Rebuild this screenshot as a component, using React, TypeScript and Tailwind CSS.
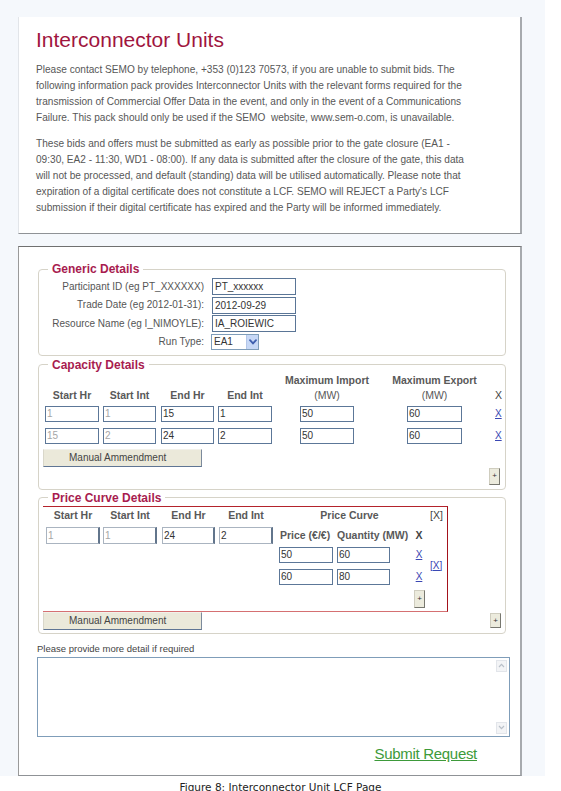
import React from "react";

const SANS = "font-['Liberation_Sans',Arial,sans-serif]";

function Field({
  value,
  className = "",
  muted = false,
}: {
  value: string;
  className?: string;
  muted?: boolean;
}) {
  return (
    <input
      readOnly
      value={value}
      className={`block shrink-0 bg-white px-[1px] text-[10px] leading-none outline-none ${
        muted ? "text-[#a6a6a6]" : "text-[#333]"
      } ${className}`}
    />
  );
}

function PlusButton({ className = "" }: { className?: string }) {
  return (
    <button
      type="button"
      className={`flex shrink-0 items-center justify-center border border-[#cfcdbf] border-r-[#77776f] border-b-[#77776f] bg-[#ecebdd] text-[8px] leading-none text-[#333] ${className}`}
    >
      +
    </button>
  );
}

function ManualButton() {
  return (
    <button
      type="button"
      className="h-[18px] w-[159px] shrink-0 border border-[#d9d7ca] border-t-[#f2f1ea] border-r-[#7c8a9c] border-b-[#5f7594] bg-[#ebe9da] pl-[25px] text-left text-[10px] leading-none text-[#444]"
    >
      Manual Ammendment
    </button>
  );
}

function Legend({ children }: { children: React.ReactNode }) {
  return (
    <legend className="ml-[9px] px-[4px] text-[12px] font-bold leading-[14px] text-[#a81c4f]">
      {children}
    </legend>
  );
}

function XLink({ children = "X" }: { children?: React.ReactNode }) {
  return (
    <a href="#" className="text-[10px] leading-none text-[#3a47b3] underline">
      {children}
    </a>
  );
}

function Chevron() {
  return (
    <svg width="8" height="6" viewBox="0 0 8 6" fill="none">
      <path d="M1 1.2 L4 4.4 L7 1.2" stroke="#3f5fae" strokeWidth="1.8" strokeLinecap="round" />
    </svg>
  );
}

const genericRows = [
  { label: "Participant ID (eg PT_XXXXXX)", value: "PT_xxxxxx" },
  { label: "Trade Date (eg 2012-01-31):", value: "2012-09-29" },
  { label: "Resource Name (eg I_NIMOYLE):", value: "IA_ROIEWIC" },
];

const capacityRows = [
  { sh: "1", si: "1", eh: "15", ei: "1", imp: "50", exp: "60" },
  { sh: "15", si: "2", eh: "24", ei: "2", imp: "50", exp: "60" },
];

const priceRows = [
  { price: "50", qty: "60" },
  { price: "60", qty: "80" },
];

const capInput = "h-[16px] border border-[#5c7798]";
const pcInput = "h-[17px] border border-[#aab4c0] border-r-2 border-r-[#62758c]";

const para1 = [
  "Please contact SEMO by telephone, +353 (0)123 70573, if you are unable to submit bids. The",
  "following information pack provides Interconnector Units with the relevant forms required for the",
  "transmission of Commercial Offer Data in the event, and only in the event of a Communications",
  "Failure. This pack should only be used if the SEMO  website, www.sem-o.com, is unavailable.",
];

const para2 = [
  "These bids and offers must be submitted as early as possible prior to the gate closure (EA1 -",
  "09:30, EA2 - 11:30, WD1 - 08:00). If any data is submitted after the closure of the gate, this data",
  "will not be processed, and default (standing) data will be utilised automatically. Please note that",
  "expiration of a digital certificate does not constitute a LCF. SEMO will REJECT a Party's LCF",
  "submission if their digital certificate has expired and the Party will be informed immediately.",
];

export default function App() {
  return (
    <div className={`h-[791px] w-[561px] overflow-hidden bg-white text-[10px] leading-[12px] ${SANS}`}>
      <div className="w-[545px] bg-[#f5f8fc] pl-[18px] pt-[17px]">
        {/* Intro page */}
        <section className="h-[217px] w-[504px] border-l border-b border-r-2 border-l-[#e2e5e9] border-b-[#8f9296] border-r-[#a7aaae] bg-white pl-[17px] pt-[11px]">
          <h1 className="text-[21px] leading-[24px] text-[#a0153e]">Interconnector Units</h1>
          <div className="mt-[10px] text-[10.1px] leading-[16px] text-[#575757]">
            {para1.map((l) => (
              <div key={l} className="whitespace-pre">
                {l}
              </div>
            ))}
          </div>
          <div className="mt-[10px] text-[10.1px] leading-[16px] text-[#575757]">
            {para2.map((l) => (
              <div key={l} className="whitespace-pre">
                {l}
              </div>
            ))}
          </div>
        </section>

        {/* LCF form page */}
        <section className="mt-[12px] h-[530px] w-[504px] border-t border-l border-b border-r-2 border-t-[#707070] border-l-[#9a9a9a] border-b-[#8f9296] border-r-[#a7aaae] bg-white pt-[15px]">
          {/* Generic Details */}
          <fieldset className="ml-[19px] w-[468px] rounded-[4px] border border-[#d6d3c8] pt-[2px] pb-[5px]">
            <Legend>Generic Details</Legend>
            <div className="flex flex-col gap-[1.5px]">
              {genericRows.map((r) => (
                <div key={r.label} className="flex items-center">
                  <div className="w-[165px] whitespace-nowrap text-right text-[10px] leading-none text-[#555]">
                    {r.label}
                  </div>
                  <Field
                    value={r.value}
                    className="ml-[8px] h-[17px] w-[84px] border border-[#5a7596] pl-[2px] text-[10.5px]"
                  />
                </div>
              ))}
              <div className="flex items-center">
                <div className="w-[165px] text-right text-[10px] leading-none text-[#555]">Run Type:</div>
                <div className="ml-[7px] flex h-[16px] w-[48px] border border-[#7f9db9] bg-white">
                  <span className="flex-1 pl-[2px] text-[10px] leading-[14px] text-[#333]">EA1</span>
                  <span className="flex w-[12px] items-center justify-center border-l border-[#b3c6e8] bg-[#c7d8f6]">
                    <Chevron />
                  </span>
                </div>
              </div>
            </div>
          </fieldset>

          {/* Capacity Details */}
          <fieldset className="ml-[19px] mt-[2px] w-[468px] rounded-[4px] border border-[#d6d3c8] pt-[1.5px] pb-[4px]">
            <Legend>Capacity Details</Legend>
            <div className="flex items-end text-[10.5px] font-bold leading-[15px] text-[#595959]">
              <div className="ml-[6px] flex w-[54px] flex-col items-center whitespace-nowrap">Start Hr</div>
              <div className="ml-[4px] flex w-[53px] flex-col items-center whitespace-nowrap">Start Int</div>
              <div className="ml-[5px] flex w-[53px] flex-col items-center whitespace-nowrap">End Hr</div>
              <div className="ml-[4px] flex w-[54px] flex-col items-center whitespace-nowrap">End Int</div>
              <div className="ml-[28px] flex w-[54px] flex-col items-center whitespace-nowrap">
                <span>Maximum Import</span>
                <span className="font-normal">(MW)</span>
              </div>
              <div className="ml-[53px] flex w-[55px] flex-col items-center whitespace-nowrap">
                <span>Maximum Export</span>
                <span className="font-normal">(MW)</span>
              </div>
              <div className="ml-[33px] font-normal text-[#444]">X</div>
            </div>
            {capacityRows.map((r, i) => (
              <div key={i} className={`flex h-[16px] items-center leading-none ${i === 0 ? "mt-[2.5px]" : "mt-[6px]"}`}>
                <Field value={r.sh} muted className={`ml-[6px] w-[54px] ${capInput}`} />
                <Field value={r.si} muted className={`ml-[4px] w-[53px] ${capInput}`} />
                <Field value={r.eh} className={`ml-[5px] w-[53px] ${capInput}`} />
                <Field value={r.ei} className={`ml-[4px] w-[54px] ${capInput}`} />
                <Field value={r.imp} className={`ml-[28px] w-[54px] ${capInput}`} />
                <Field value={r.exp} className={`ml-[53px] w-[55px] ${capInput}`} />
                <div className="ml-[33px] leading-none">
                  <XLink />
                </div>
              </div>
            ))}
            <div className="ml-[4px] mt-[5px] flex">
              <ManualButton />
            </div>
            <div className="mt-[1px] flex justify-end pr-[5px]">
              <PlusButton className="h-[17px] w-[11px]" />
            </div>
          </fieldset>

          {/* Price Curve Details */}
          <fieldset className="ml-[19px] mt-[1px] w-[468px] rounded-[4px] border border-[#d6d3c8] pb-[3px]">
            <Legend>Price Curve Details</Legend>
            <div className="ml-[4px] mt-[1px] flex w-[405px] items-start border-t border-r border-b border-t-[#b4232c] border-r-[#a3121b] border-b-[#d57072] pb-[3px]">
              {/* hour / interval block */}
              <div className="flex flex-col pl-[3px]">
                <div className="mt-[1.5px] flex text-[10.5px] font-bold leading-[15px] text-[#595959]">
                  <div className="flex w-[54px] flex-col items-center whitespace-nowrap">Start Hr</div>
                  <div className="ml-[3px] flex w-[54px] flex-col items-center whitespace-nowrap">Start Int</div>
                  <div className="ml-[5px] flex w-[53px] flex-col items-center whitespace-nowrap">End Hr</div>
                  <div className="ml-[4px] flex w-[54px] flex-col items-center whitespace-nowrap">End Int</div>
                </div>
                <div className="mt-[3.5px] flex">
                  <Field value="1" muted className={`w-[54px] ${pcInput}`} />
                  <Field value="1" muted className={`ml-[3px] w-[54px] ${pcInput}`} />
                  <Field value="24" className={`ml-[5px] w-[53px] ${pcInput}`} />
                  <Field value="2" className={`ml-[4px] w-[54px] ${pcInput}`} />
                </div>
              </div>

              {/* price curve table */}
              <div className="ml-[6px] flex flex-col">
                <div className="mt-[1.5px] flex text-[10.5px] font-bold leading-[15px] text-[#595959]">
                  <div className="flex w-[141px] flex-col items-center whitespace-nowrap">Price Curve</div>
                  <div className="ml-[10px] font-normal text-[#444]">[X]</div>
                </div>
                <div className="mt-[3.5px] flex h-[18px] items-center whitespace-nowrap text-[10.5px] font-bold leading-none text-[#595959]">
                  <div className="w-[54px] pl-[1px]">Price (€/€)</div>
                  <div className="ml-[4px] w-[53px]">Quantity (MW)</div>
                  <div className="ml-[21px] w-[16px] text-center text-[#444]">X</div>
                </div>
                <div className="mt-[2px] flex leading-none">
                  <div className="flex flex-col gap-[6px]">
                    {priceRows.map((r, i) => (
                      <div key={i} className="flex h-[16px] items-center">
                        <Field value={r.price} className={`w-[54px] ${capInput}`} />
                        <Field value={r.qty} className={`ml-[4px] w-[53px] ${capInput}`} />
                        <div className="ml-[21px] w-[16px] text-center leading-none">
                          <XLink />
                        </div>
                      </div>
                    ))}
                  </div>
                  <div className="ml-[3px] self-center leading-none">
                    <XLink>[X]</XLink>
                  </div>
                </div>
                <div className="ml-[135px] mt-[5px] flex">
                  <PlusButton className="h-[18px] w-[11px]" />
                </div>
              </div>
            </div>
            <div className="flex items-center justify-between pl-[4px] pr-[4px]">
              <ManualButton />
              <PlusButton className="h-[15px] w-[11px]" />
            </div>
          </fieldset>

          {/* Free-text details */}
          <div className="ml-[18px] mt-[9px] text-[9.5px] leading-[12px] text-[#444]">
            Please provide more detail if required
          </div>
          <div className="ml-[18px] mt-[2px] flex h-[80px] w-[473px] border border-[#7f9db9] bg-white">
            <div className="flex-1" />
            <div className="flex w-[13px] flex-col justify-between py-[2px] pr-[2px]">
              <div className="flex h-[12px] w-[11px] items-center justify-center border border-[#e2e5ea] bg-[#f3f4f6]">
                <svg width="7" height="5" viewBox="0 0 7 5" fill="none">
                  <path d="M1 4 L3.5 1.3 L6 4" stroke="#b9c0c9" strokeWidth="1.2" />
                </svg>
              </div>
              <div className="flex h-[12px] w-[11px] items-center justify-center border border-[#e2e5ea] bg-[#f3f4f6]">
                <svg width="7" height="5" viewBox="0 0 7 5" fill="none">
                  <path d="M1 1 L3.5 3.7 L6 1" stroke="#b9c0c9" strokeWidth="1.2" />
                </svg>
              </div>
            </div>
          </div>
          <div className="mt-[8px] flex justify-end pr-[43px]">
            <a href="#" className="text-[15px] leading-[18px] tracking-[-0.3px] text-[#3d9a3a] underline">
              Submit Request
            </a>
          </div>
        </section>
      </div>
      <div className="mt-[5px] text-center font-['DejaVu_Sans',Verdana,sans-serif] text-[10.5px] leading-[12px] text-[#222]">
        Figure 8: Interconnector Unit LCF Page
      </div>
    </div>
  );
}
